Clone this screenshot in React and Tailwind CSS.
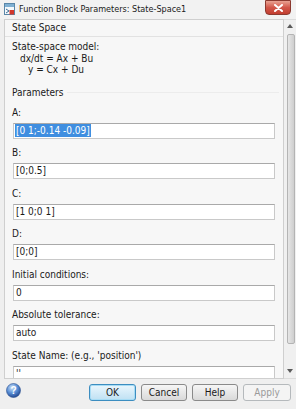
import React from 'react'

const FONT = { fontFamily: '"Liberation Sans Narrow", "DejaVu Sans Condensed", "Liberation Sans", sans-serif' }

const FIELDS = [
  { label: 'A:', value: '[0 1;-0.14 -0.09]', selected: true, mb: 'mb-[7px]' },
  { label: 'B:', value: '[0;0.5]', mb: 'mb-[8px]' },
  { label: 'C:', value: '[1 0;0 1]', mb: 'mb-[7px]' },
  { label: 'D:', value: '[0;0]', mb: 'mb-[8px]' },
  { label: 'Initial conditions:', value: '0', mb: 'mb-[7px]' },
  { label: 'Absolute tolerance:', value: 'auto', mb: 'mb-[8px]' },
  { label: "State Name: (e.g., 'position')", value: "''", mb: 'mb-0' }
]

function BlockIcon() {
  return (
    <svg width="11" height="12" viewBox="0 0 11 12">
      <rect x="0.5" y="0.5" width="10" height="11" fill="#f4f8fb" stroke="#5b87a8" />
      <rect x="1" y="1" width="9" height="3" fill="#7fb0d3" />
      <path d="M2 6 L5 8 L2 10" fill="none" stroke="#3a6d96" strokeWidth="1" />
      <rect x="5.5" y="7" width="4.5" height="4.5" fill="#d2372b" />
    </svg>
  )
}

function HelpIcon() {
  return (
    <svg width="15" height="15" viewBox="0 0 15 15">
      <defs>
        <radialGradient id="hg" cx="40%" cy="30%" r="70%">
          <stop offset="0%" stopColor="#cfe3f8" />
          <stop offset="55%" stopColor="#5a8fd6" />
          <stop offset="100%" stopColor="#244a94" />
        </radialGradient>
      </defs>
      <circle cx="7.5" cy="7.5" r="7" fill="url(#hg)" stroke="#2a4f8f" strokeWidth="0.6" />
      <text x="7.5" y="11" textAnchor="middle" fontSize="10" fontWeight="bold" fill="#ffffff" fontFamily="Liberation Sans, sans-serif">?</text>
    </svg>
  )
}

function Field({ label, value, selected, mb }) {
  return (
    <div className={mb}>
      <div className="h-[14px] leading-[14px] text-[#1a1a1a]">{label}</div>
      <div className="mt-[3px] ml-[1px] h-[16px] w-[262px] border border-[#c9c9c9] border-t-[#a9a9a9] bg-white flex items-center px-[1px]">
        {selected ? (
          <span className="bg-[#3f8ee0] text-white px-[1px] leading-[13px]">{value}</span>
        ) : (
          <span className="px-[1px] text-[#1a1a1a]">{value}</span>
        )}
      </div>
    </div>
  )
}

function Button({ children, focused, disabled }) {
  return (
    <div
      className={
        'h-[17px] flex items-center justify-center rounded-[3px] border ' +
        (focused
          ? 'w-[47px] border-[#3c8dc0] bg-gradient-to-b from-[#eaf6fd] to-[#bfe1f3] shadow-[inset_0_0_0_1px_#a7dcf5] text-[#1a1a1a]'
          : disabled
          ? 'w-[48px] border-[#b5b9bc] bg-[#f4f4f4] text-[#9a9a9a]'
          : 'w-[46px] border-[#8a8a8a] bg-gradient-to-b from-[#f6f6f6] to-[#d9d9d9] text-[#1a1a1a]')
      }
    >
      {children}
    </div>
  )
}

export default function App() {
  return (
    <div className="w-[296px] h-[409px] bg-[#efefef] flex flex-col overflow-hidden text-[10px]" style={FONT}>
      {/* Title bar */}
      <div className="h-[19px] flex items-start pl-[4px] bg-[#f2f2f2]">
        <div className="mt-[3px]">
          <BlockIcon />
        </div>
        <div className="ml-[4px] mt-[3px] text-[9px] leading-[12px] text-[#1a1a1a]">Function Block Parameters: State-Space1</div>
        <div className="ml-auto mr-[5px] w-[26px] h-[15px] rounded-b-[4px] border border-[#8c3a30] bg-gradient-to-b from-[#e8a293] via-[#d2574a] to-[#c23d2f] flex items-center justify-center">
          <svg width="9" height="8" viewBox="0 0 9 8">
            <path d="M1 1 L8 7 M8 1 L1 7" stroke="#ffffff" strokeWidth="2" strokeLinecap="round" />
          </svg>
        </div>
      </div>

      {/* Body */}
      <div className="ml-[4px] flex h-[360px]">
        <div className="w-[280px] border border-[#cfcfcf] bg-[#f7f7f7] overflow-hidden flex flex-col">
          <div className="h-[17px] border-b border-[#e2e2e2] pl-[7px] leading-[16px] text-[#1a1a1a]">State Space</div>
          <div className="mt-[4px] pl-[7px] leading-[11.5px] text-[#1a1a1a]">
            <div>State-space model:</div>
            <div className="pl-[8px]">dx/dt = Ax + Bu</div>
            <div className="pl-[16px]">y = Cx + Du</div>
          </div>
          <div className="mt-[5px] h-px bg-[#e3e3e3] mx-[4px]" />
          <div className="mt-[6px] pl-[7px] flex items-center leading-[12px] text-[#1a1a1a]">
            <span>Parameters</span>
            <div className="ml-[4px] mr-[4px] flex-1 h-px bg-[#ececec]" />
          </div>
          <div className="mt-[7px] pl-[7px]">
            {FIELDS.map((f) => (
              <Field key={f.label} {...f} />
            ))}
          </div>
        </div>

        {/* Scrollbar */}
        <div className="w-[12px] bg-[#f0f0f0] border-y border-[#dcdcdc] flex flex-col items-center">
          <svg className="mt-[4px]" width="6" height="4" viewBox="0 0 6 4">
            <path d="M0 4 L3 0 L6 4 Z" fill="#5a5a5a" />
          </svg>
          <div className="mt-[6px] ml-[2px] w-[8px] h-[310px] rounded-[2px] border border-[#b4b4b4] bg-gradient-to-r from-[#e6e6e6] to-[#cfcfcf]" />
          <svg className="mt-auto mb-[5px]" width="6" height="4" viewBox="0 0 6 4">
            <path d="M0 0 L6 0 L3 4 Z" fill="#5a5a5a" />
          </svg>
        </div>
      </div>

      {/* Buttons */}
      <div className="flex items-start pt-[5px] pl-[6px]">
        <div className="-mt-[1px]">
          <HelpIcon />
        </div>
        <div className="ml-[68px] flex gap-[5px]">
          <Button focused>OK</Button>
          <Button>Cancel</Button>
          <Button>Help</Button>
          <Button disabled>Apply</Button>
        </div>
      </div>
    </div>
  )
}
